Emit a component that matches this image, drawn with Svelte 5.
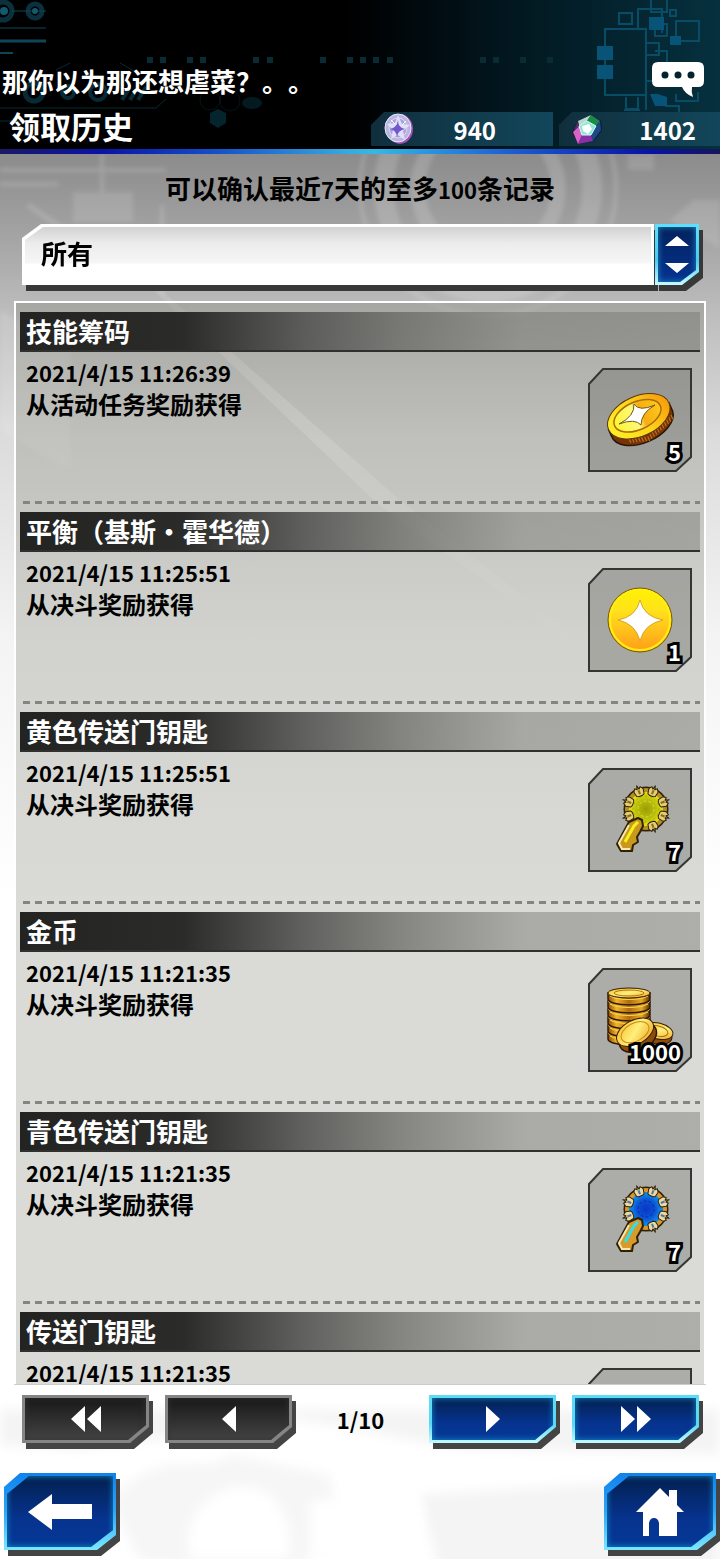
<script>
  const records = [
    { title: '技能筹码', time: '2021/4/15 11:26:39', note: '从活动任务奖励获得', icon: 'chip', count: 5 },
    { title: '平衡（基斯・霍华德）', time: '2021/4/15 11:25:51', note: '从决斗奖励获得', icon: 'skill', count: 1 },
    { title: '黄色传送门钥匙', time: '2021/4/15 11:25:51', note: '从决斗奖励获得', icon: 'key-yellow', count: 7 },
    { title: '金币', time: '2021/4/15 11:21:35', note: '从决斗奖励获得', icon: 'gold', count: 1000 },
    { title: '青色传送门钥匙', time: '2021/4/15 11:21:35', note: '从决斗奖励获得', icon: 'key-blue', count: 7 },
    { title: '传送门钥匙', time: '2021/4/15 11:21:35', note: '', icon: '', count: null }
  ];
  const claws = [-158, -112, -68, -22, 22, 68, 158];
  const headerDots = [147, 160, 187, 200, 253, 267, 320, 347, 360, 373, 387, 480, 493, 520, 547];
  const layers = [5, 4, 3, 2, 1, 0];
  const ridges = Array.from({ length: 17 }, (_, i) => i);
  let filter = $state('all');
</script>

<div class="page">
  <svg class="backdrop" viewBox="0 0 720 1559" preserveAspectRatio="xMidYMin slice" aria-hidden="true">
    <defs>
      <linearGradient id="streak" gradientUnits="userSpaceOnUse" x1="110" y1="250" x2="600" y2="660">
        <stop offset="0" stop-color="#fff" stop-opacity="0" />
        <stop offset=".45" stop-color="#fff" stop-opacity=".35" />
        <stop offset="1" stop-color="#fff" stop-opacity="0" />
      </linearGradient>
      <filter id="soft"><feGaussianBlur stdDeviation="6" /></filter>
      <filter id="haze"><feGaussianBlur stdDeviation="2" /></filter>
    </defs>
    <g fill="none" stroke="#fff" stroke-opacity=".15" filter="url(#haze)">
      <circle cx="488" cy="188" r="104" stroke-width="20" />
      <circle cx="488" cy="188" r="70" stroke-width="15" />
      <circle cx="488" cy="188" r="128" stroke-width="4" />
      <path d="M102 154v38M0 170h166M0 184h58M162 205v90" stroke-width="4" />
      <path d="M28 205l32 22" stroke-width="5" />
    </g>
    <g fill="#fff" fill-opacity=".12" filter="url(#haze)">
      <path d="M628 154h26v16h-26zM73 192h60v30H73zM670 220l24-20h26v48z" />
      <path d="M0 310l70 40v120L0 430z" />
    </g>
    <path d="M128 266l8 2 264 232 200 156-6 4-216-156z" fill="url(#streak)" />
    <g filter="url(#soft)" fill="#eee" fill-opacity=".65">
      <path d="M0 1410h720v44l-260-5-160-30L80 1450 0 1445z" />
      <path d="M110 1500c60-60 90-20 120-45l100 20 10 70-70 30-130-15z" fill-opacity=".5" />
      <path d="M420 1495l190-12 110 20v70H440z" />
    </g>
    <path d="M190 1559c-10-40 20-75 58-72 30 3 45 30 42 72zM310 1500h110v59H310z" fill="#fff" filter="url(#soft)" />
  </svg>

  <header class="top">
    <svg class="decor left" width="560" height="149" viewBox="0 0 560 149" aria-hidden="true">
      <g fill="none" stroke="#0e4657">
        <circle cx="3" cy="11" r="9" stroke-width="5" opacity=".7" />
        <circle cx="35" cy="11" r="7" stroke-width="5" opacity=".7" />
        <path d="M12 11h34M0 28h46" stroke-width="1" />
        <path d="M0 41h46" stroke-width="3" />
        <path d="M0 53h13" stroke-width="2" />
        <g opacity=".6">
          <path d="M0 108h156l10-9M0 121h40M56 70l14-7M120 63l14 8" stroke-width="1" />
          <circle cx="34" cy="92" r="9" stroke-width="5" />
          <circle cx="68" cy="92" r="6" stroke-width="4" />
          <circle cx="98" cy="92" r="8" stroke-width="4" />
          <path d="M122 100l8-13M130 100l8-13M138 100l8-13" stroke-width="4" />
        </g>
        <g opacity=".3">
          <circle cx="210" cy="100" r="10" />
          <circle cx="230" cy="101" r="10" />
        </g>
      </g>
      <path d="M210 113l8-4 8 4v10l-8 5-8-5z" fill="#04242e" />
      <ellipse cx="252" cy="103" rx="10" ry="6" fill="#041a21" />
      <circle cx="4" cy="11" r="4" fill="#115a70" />
      <circle cx="35" cy="11" r="3" fill="#115a70" />
      {#each headerDots as x}
        <rect {x} y="57" width="6" height="6" fill="#0a2a34" />
      {/each}
    </svg>
    <svg class="decor right" width="140" height="149" viewBox="580 0 140 149" aria-hidden="true">
      <g fill="none" stroke="#084d66" stroke-width="2">
        <path d="M619 13h13v11h-13zM638 29V9h24v24M651 0v12h16V0M670 10h6v6h-6zM676 21h23v20h-23zM655 24h12v12h-12z" />
        <path d="M605 45V29h41v66h-41V45M646 43h13v12h-13v26h12M655 51h12v13M646 95v15M638 97v12h-12V97M640 110h-16M676 94v7h22v-9M665 106h14v10" />
      </g>
      <path d="M649 17h15v13h-15zM670 36h11v9h-11zM597 46h16v14h-16zM597 65h16v14h-16zM650 94h8l9 3v9h-12z" fill="#075478" />
    </svg>

    <div class="marquee">
      <p>那你以为那还想虐菜？。。</p>
      <button class="chat" type="button" aria-label="聊天">
        <svg width="52" height="35" viewBox="0 0 52 35">
          <path d="M6 0h40q6 0 6 6v13q0 6-6 6h-6q-1 5 1 10-8-3-11-10H6q-6 0-6-6V6q0-6 6-6z" fill="#fff" />
          <circle cx="13" cy="13" r="3.5" fill="#04232e" />
          <circle cx="26" cy="13" r="3.5" fill="#04232e" />
          <circle cx="39" cy="13" r="3.5" fill="#04232e" />
        </svg>
      </button>
    </div>

    <div class="titlebar">
      <h1>领取历史</h1>
      <div class="wallet">
        <svg width="30" height="32" viewBox="0 0 30 32" aria-hidden="true">
          <ellipse cx="16" cy="16" rx="13" ry="15" fill="#a04fb4" />
          <ellipse cx="14" cy="15" rx="13" ry="14" fill="#b9b6dd" stroke="#e8e4fa" />
          <ellipse cx="14" cy="15" rx="9" ry="10" fill="#a7a2d8" stroke="#dcd8f5" />
          <path d="M14 2l4 9 8 1-7 6 2 9-7-5-7 4 2-9-6-6 8-1z" fill="#e2defb" />
          <path d="M14 7q0 8 7 9-7 1-8 8-1-7-7-8 7-1 8-9z" fill="#7059c8" />
          <path d="M7 7l4 4M22 8l-4 4" stroke="#fff" />
        </svg>
        <span>940</span>
      </div>
      <div class="wallet last">
        <svg width="30" height="32" viewBox="0 0 30 32" aria-hidden="true">
          <path d="M6 8L19 2l10 6 1 9-8 11-16 3-6-12z" fill="#1b1433" />
          <path d="M6 8L19 2l-4 6-8 5z" fill="#b8d9cf" />
          <path d="M19 2l9 6-4 5-9-5z" fill="#1c8b45" />
          <path d="M28 8l1 9-8 11-2-6 5-9z" fill="#1c4a86" />
          <path d="M21 28L6 31l4-9h9z" fill="#8a2fa8" />
          <path d="M6 31L1 19l6-6 3 9z" fill="#d663c5" />
          <path d="M1 19l5-11 1 5z" fill="#5b2c66" />
          <path d="M7 13l8-5 9 5-5 9h-9z" fill="#8be9d5" stroke="#d9fff7" />
          <path d="M10 13l7-2 3 5-4 5-5-3z" fill="#fff" />
        </svg>
        <span>1402</span>
      </div>
    </div>
  </header>

  <main>
    <p class="hint">可以确认最近<span>7</span>天的至多<span>100</span>条记录</p>

    <div class="picker">
      <div class="field">
        <select bind:value={filter} aria-label="筛选">
          <option value="all">所有</option>
        </select>
      </div>
      <div class="stepper" aria-hidden="true">
        <svg width="24" height="38" viewBox="0 0 24 38"><path d="M12 0l12 10H0zM0 27h24L12 37z" fill="#fff" /></svg>
      </div>
    </div>

    <section class="panel" aria-label="领取历史">
      <ul>
        {#each records as r}
          <li>
            <h2>{r.title}</h2>
            <div class="row">
              <div class="info">
                <time>{r.time}</time>
                {#if r.note}<p>{r.note}</p>{/if}
              </div>
              <div class="tile">
                <svg width="104" height="104" viewBox="0 0 104 104" aria-hidden="true">
                  <path d="M15 1h88v88l-15 14H1V16z" fill="#6e6e69" fill-opacity=".42" stroke="#353533" stroke-width="2" />
                  {#if r.icon === 'chip'}
                    <defs>
                      <linearGradient id="chipFace" x1="0" y1=".6" x2="1" y2=".4">
                        <stop offset="0" stop-color="#ffee28" />
                        <stop offset=".5" stop-color="#ffd51a" />
                        <stop offset="1" stop-color="#f79b0c" />
                      </linearGradient>
                      <linearGradient id="chipMid" x1="0" y1=".5" x2="1" y2=".5">
                        <stop offset="0" stop-color="#fff62e" />
                        <stop offset=".45" stop-color="#fff77a" />
                        <stop offset=".6" stop-color="#f7ac12" />
                        <stop offset="1" stop-color="#ffc81c" />
                      </linearGradient>
                    </defs>
                    <g transform="rotate(-24 52 51)">
                      <path d="M19 48v7a33 19 0 0 0 66 2V48z" fill="#783408" stroke="#2a1605" stroke-width="1.5" />
                      {#each ridges as i}
                        <path d="M{34 + i * 3} {70 - Math.abs(i - 6)}v5" stroke="#c87a20" stroke-width="1" />
                      {/each}
                      <ellipse cx="52" cy="48" rx="33" ry="20" fill="url(#chipFace)" stroke="#5a3a08" />
                      <ellipse cx="51" cy="47" rx="25" ry="14" fill="url(#chipMid)" stroke="#a66c06" stroke-width="1.5" />
                    </g>
                    <path d="M46 36q5 8 21 1-14 8-14 20-6-7-22-1 16-8 15-20z" fill="#fff" stroke="#6f5a18" />
                  {:else if r.icon === 'skill'}
                    <defs>
                      <linearGradient id="skillFace" x1="0" y1="0" x2="0" y2="1">
                        <stop offset="0" stop-color="#fff200" />
                        <stop offset=".35" stop-color="#ffe21c" />
                        <stop offset="1" stop-color="#ff9c1a" />
                      </linearGradient>
                    </defs>
                    <circle cx="52" cy="52" r="32" fill="url(#skillFace)" stroke="#7a5708" />
                    <circle cx="52" cy="52" r="30" fill="none" stroke="#ffee10" stroke-width="2" />
                    <path d="M52 32q4 17 23 20-19 4-23 21-4-17-22-21 18-3 22-20z" fill="#fff" stroke="#d9a62a" />
                  {:else if r.icon === 'gold'}
                    <defs>
                      <linearGradient id="goldSide" x1="0" x2="1">
                        <stop offset="0" stop-color="#8a4a08" />
                        <stop offset=".2" stop-color="#f0b52c" />
                        <stop offset=".5" stop-color="#b06b10" />
                        <stop offset=".8" stop-color="#e8a824" />
                        <stop offset="1" stop-color="#5a2e06" />
                      </linearGradient>
                      <linearGradient id="goldFace" x1="0" y1="0" x2="1" y2="1">
                        <stop offset="0" stop-color="#f7b91f" />
                        <stop offset=".5" stop-color="#ffef7c" />
                        <stop offset="1" stop-color="#eaa01a" />
                      </linearGradient>
                    </defs>
                    {#each layers as n}
                      <path d="M20 {25 + n * 8}v6a21 6 0 0 0 42 0v-6z" fill="url(#goldSide)" stroke="#2e1804" stroke-width="1.5" />
                      <ellipse cx="41" cy={25 + n * 8} rx="21" ry="5" fill="#f6c02e" />
                      <path d="M22 {28 + n * 8}a21 6 0 0 0 38 0" fill="none" stroke="#ffd84e" stroke-width="1" />
                    {/each}
                    <ellipse cx="41" cy="25" rx="21" ry="5" fill="url(#goldFace)" stroke="#2e1804" />
                    <ellipse cx="41" cy="25" rx="15" ry="3" fill="none" stroke="#b07510" />
                    <g transform="rotate(14 70 64)">
                      <ellipse cx="70" cy="67" rx="15" ry="9" fill="#8c4c0a" stroke="#2e1804" />
                      <ellipse cx="70" cy="63" rx="15" ry="8" fill="url(#goldFace)" stroke="#3a2006" />
                      <ellipse cx="70" cy="63" rx="10" ry="5" fill="none" stroke="#a8690c" />
                    </g>
                    <g transform="rotate(-28 48 66)">
                      <ellipse cx="48" cy="70" rx="20" ry="13" fill="#8c4c0a" stroke="#2e1804" stroke-width="1.5" />
                      <ellipse cx="48" cy="64" rx="20" ry="12" fill="url(#goldFace)" stroke="#3a2006" />
                      <ellipse cx="48" cy="64" rx="15" ry="9" fill="none" stroke="#c98a14" />
                    </g>
                  {:else if r.icon}
                    {@const blue = r.icon === 'key-blue'}
                    <defs>
                      <radialGradient id={r.icon}>
                        <stop offset="0" stop-color={blue ? '#0a35c4' : '#9a9d06'} />
                        <stop offset=".5" stop-color={blue ? '#0a55d6' : '#b9bd0a'} />
                        <stop offset="1" stop-color={blue ? '#12a4f2' : '#f0ee12'} />
                      </radialGradient>
                    </defs>
                    <circle cx="58" cy="41" r="19" fill="none" stroke="#2f2108" stroke-width="7" />
                    <circle cx="58" cy="41" r="19" fill={`url(#${r.icon})`} stroke={blue ? '#d9962a' : '#b98c24'} stroke-width="4" />
                    <circle cx="58" cy="41" r="8" fill="none" stroke={blue ? '#0c2a9e' : '#dcdc3c'} stroke-dasharray="3 2" />
                    <circle cx="58" cy="41" r="13" fill="none" stroke={blue ? '#1e7df0' : '#a3a60a'} stroke-dasharray="2 3" />
                    {#each claws as a}
                      <g transform="rotate({a + 90} 58 41)">
                        <path d="M54 26l-1-5 2-3 2 2 1-4 1 4 2-2 2 3-1 5-2 1h-4z" fill={blue ? '#ecd9a0' : '#e2cd74'} stroke="#2f2108" stroke-linejoin="round" />
                        <path d="M58 21v4" stroke={blue ? '#4b78ac' : '#8a6a14'} stroke-width="2" />
                      </g>
                    {/each}
                    <path
                      d="M50 50L41 54 36 63 29 76 33 83 44 83 45 77 50 74 49 69 52 64 55 58 54 52z"
                      fill={blue ? '#d99a2c' : '#c9981c'}
                      stroke="#2f2108"
                      stroke-width="2"
                      stroke-linejoin="round"
                    />
                    <path d="M50 54L46 58 37 74" fill="none" stroke={blue ? '#2ee0e8' : '#f4f01a'} stroke-width="3" />
                    <path d="M41 57L31 75l3 6h8" fill="none" stroke="#f5e9b0" stroke-width="2" />
                  {/if}
                </svg>
                {#if r.count !== null}<span class="count">{r.count}</span>{/if}
              </div>
            </div>
          </li>
        {/each}
      </ul>
    </section>

    <nav class="pager" aria-label="分页">
      <button class="key grey" type="button" aria-label="第一页">
        <span class="face"><svg width="30" height="26" viewBox="0 0 30 26"><path d="M14 0v26L0 13zM30 0v26L16 13z" /></svg></span>
      </button>
      <button class="key grey" type="button" aria-label="上一页">
        <span class="face"><svg width="14" height="26" viewBox="0 0 14 26"><path d="M14 0v26L0 13z" /></svg></span>
      </button>
      <span class="pos">1/10</span>
      <button class="key" type="button" aria-label="下一页">
        <span class="face"><svg width="14" height="26" viewBox="0 0 14 26"><path d="M0 0v26l14-13z" /></svg></span>
      </button>
      <button class="key" type="button" aria-label="最后一页">
        <span class="face"><svg width="30" height="26" viewBox="0 0 30 26"><path d="M0 0v26l14-13zM16 0v26l14-13z" /></svg></span>
      </button>
    </nav>
  </main>

  <footer>
    <button class="key big" type="button" aria-label="返回">
      <span class="face"><svg width="64" height="36" viewBox="0 0 64 36"><path d="M0 18L24 0v10h40v15H24v11z" /></svg></span>
    </button>
    <button class="key big" type="button" aria-label="主页">
      <span class="face"><svg width="48" height="48" viewBox="0 0 48 48"><path d="M24 0l9 9V2h8v15l7 7h-7v24H23V35q-1-5-5-5t-5 5v13H7V24H0z" /></svg></span>
    </button>
  </footer>
</div>

<style>
  :global(body) {
    margin: 0;
  }
  .page {
    position: relative;
    display: flex;
    flex-direction: column;
    box-sizing: border-box;
    height: 100vh;
    overflow: hidden;
    color: #000;
    font-family: 'Noto Sans CJK SC', sans-serif;
    font-weight: 700;
    text-spacing-trim: space-all;
    background: linear-gradient(#8a8a8a 150px, #a2a2a2 230px, #bcbcbc 310px, #dcdcdc 440px, #f4f4f4 640px, #fff 900px);
  }
  p,
  h1,
  h2,
  ul {
    margin: 0;
    padding: 0;
  }
  button {
    padding: 0;
    border: 0;
    background: none;
    cursor: pointer;
  }
  svg {
    display: block;
  }
  .backdrop {
    position: absolute;
    inset: 0;
    width: 100%;
    height: 100%;
  }

  .top {
    position: relative;
    box-sizing: border-box;
    padding-top: 62px;
    color: #fff;
    background: linear-gradient(90deg, #000 0, #000 48%, #021820 72%, #06303e 100%);
  }
  .top::after {
    content: '';
    display: block;
    height: 5px;
    background: linear-gradient(90deg, #1a1a66 0, #0a12a8 14%, #1450c8 30%, #35a8e0 48%, #35b8e4 52%, #1c62d4 70%, #0a12a8 90%, #15155c 100%);
  }
  .decor {
    position: absolute;
    top: 0;
  }
  .left {
    left: 0;
  }
  .right {
    right: 0;
  }
  .marquee {
    position: relative;
    display: flex;
    justify-content: space-between;
    align-items: flex-start;
    padding: 0 16px 0 2px;
    height: 50px;
    font-size: 26px;
    line-height: 38px;
  }
  .titlebar {
    position: relative;
    display: flex;
    gap: 6px;
    height: 37px;
  }
  h1 {
    flex: 1;
    padding-left: 9px;
    font-size: 31px;
    line-height: 28px;
  }
  .wallet {
    display: flex;
    align-items: center;
    box-sizing: border-box;
    width: 182px;
    height: 34px;
    padding: 0 57px 0 13px;
    font-size: 24px;
    line-height: 34px;
    background: linear-gradient(90deg, #102f3d, #12465a);
    clip-path: polygon(13px 0, 100% 0, 100% 100%, 0 100%, 0 13px);
  }
  .wallet span {
    flex: 1;
    padding-top: 2px;
    text-align: right;
  }
  .wallet.last {
    width: 161px;
    padding-right: 24px;
  }

  main {
    position: relative;
    flex: 1;
    min-height: 0;
    display: flex;
    flex-direction: column;
  }
  .hint {
    font-size: 26px;
    line-height: 68px;
    text-align: center;
  }
  .hint span {
    font-size: 22px;
  }
  .picker {
    display: flex;
    gap: 1px;
    height: 61px;
    margin: 1px 21px 16px 22px;
    filter: drop-shadow(4px 6px 0 #383838);
  }
  .field {
    flex: 1;
    padding: 3px;
    background: #fff;
    clip-path: polygon(19px 0, 100% 0, 100% 100%, 0 100%, 0 14px);
  }
  select {
    display: block;
    width: 100%;
    height: 100%;
    padding: 0 16px 4px;
    border: 0;
    border-radius: 0;
    appearance: none;
    color: #000;
    font: inherit;
    font-size: 26px;
    background: linear-gradient(#d2d2d2, #ececec 30%, #f6f6f6 65%, #fff 68%);
    clip-path: polygon(18px 0, 100% 0, 100% 100%, 0 100%, 0 13px);
  }
  .stepper {
    display: grid;
    place-items: center;
    width: 44px;
    background: linear-gradient(#5fe0fa, #48cdf2 60%, #c8fbff);
    clip-path: polygon(0 0, 100% 0, 100% 48px, 27px 100%, 0 100%);
  }
  .stepper::before,
  .stepper svg {
    grid-area: 1 / 1;
  }
  .stepper svg {
    z-index: 1;
  }
  .stepper::before {
    content: '';
    width: 38px;
    height: 55px;
    background: linear-gradient(#03215c, #063391);
    box-shadow: inset 0 0 6px #1b8fc9;
    clip-path: polygon(0 0, 100% 0, 100% 43px, 22px 100%, 0 100%);
  }

  .panel {
    flex: 1;
    min-height: 0;
    display: flex;
    margin: 0 14px;
    padding: 9px 4px 0;
    border: 2px solid #fff;
    border-bottom: 0;
    background: rgba(108, 110, 90, 0.25);
    box-shadow: 0 1px 0 #ccc;
  }
  ul {
    flex: 1;
    overflow: hidden;
    list-style: none;
  }
  li {
    height: 200px;
  }
  h2 {
    box-sizing: border-box;
    height: 40px;
    padding-left: 6px;
    color: #fff;
    font-size: 26px;
    line-height: 38px;
    border-bottom: 2px solid #30302f;
    background: linear-gradient(90deg, #232322 0, #2b2b2a 24%, rgba(84, 84, 82, 0.9) 42%, rgba(100, 100, 97, 0.72) 56%, rgba(112, 112, 108, 0.45) 74%, rgba(112, 112, 108, 0.42) 100%);
  }
  .row {
    display: flex;
    justify-content: space-between;
    align-items: flex-start;
    box-sizing: border-box;
    height: 152px;
    padding: 8px 8px 0 6px;
    background: repeating-linear-gradient(90deg, transparent 0 3px, #85857f 3px 10px, transparent 10px 12px) bottom / 100% 3px no-repeat;
  }
  .info {
    display: grid;
    gap: 4px;
    line-height: 24px;
  }
  .info p {
    line-height: 32px;
    font-size: 24px;
  }
  time {
    font-size: 22px;
  }
  .tile {
    position: relative;
    margin-top: 8px;
  }
  .count {
    position: absolute;
    right: 11px;
    bottom: 6px;
    color: #fff;
    font-size: 22px;
    line-height: 30px;
    -webkit-text-stroke: 6px #000;
    paint-order: stroke fill;
  }

  .pager {
    display: flex;
    align-items: center;
    gap: 16px;
    margin: 11px 21px 0 22px;
  }
  .pos {
    flex: 1;
    font-size: 22px;
    line-height: 32px;
    text-align: center;
  }
  .key {
    --edge: linear-gradient(#5fdcf5, #58d8f6 60%, #c4fbff);
    --fill: linear-gradient(#03204f, #06338f 60%, #053896);
    --glow: #1290cc;
    width: 127px;
    height: 48px;
    filter: drop-shadow(4px 6px 0 #444);
  }
  .grey {
    --edge: #858585;
    --fill: linear-gradient(#181818, #444);
    --glow: #333;
  }
  .face {
    display: grid;
    height: 100%;
    padding: 3px;
    box-sizing: border-box;
    background: var(--edge);
    clip-path: polygon(0 0, 100% 0, 100% 32px, 108px 100%, 0 100%);
  }
  .face::before {
    content: '';
    grid-area: 1 / 1;
    background: var(--fill);
    box-shadow: inset 0 0 6px var(--glow);
    clip-path: polygon(0 0, 100% 0, 100% 27px, 103px 100%, 0 100%);
  }
  .face svg {
    grid-area: 1 / 1;
    place-self: center;
    fill: #fff;
    z-index: 1;
  }
  .big {
    --edge: linear-gradient(#0f82ee, #2ba6f6 50%, #7ce8ff);
    width: 112px;
    height: 77px;
  }
  .big .face {
    clip-path: polygon(16px 0, 100% 0, 100% 62px, 93px 100%, 0 100%, 0 14px);
  }
  .big .face::before {
    clip-path: polygon(22px 0, 100% 0, 100% 54px, 84px 100%, 0 100%, 0 18px);
  }
  footer {
    position: relative;
    display: flex;
    justify-content: space-between;
    padding: 30px 4px 9px;
  }
</style>
